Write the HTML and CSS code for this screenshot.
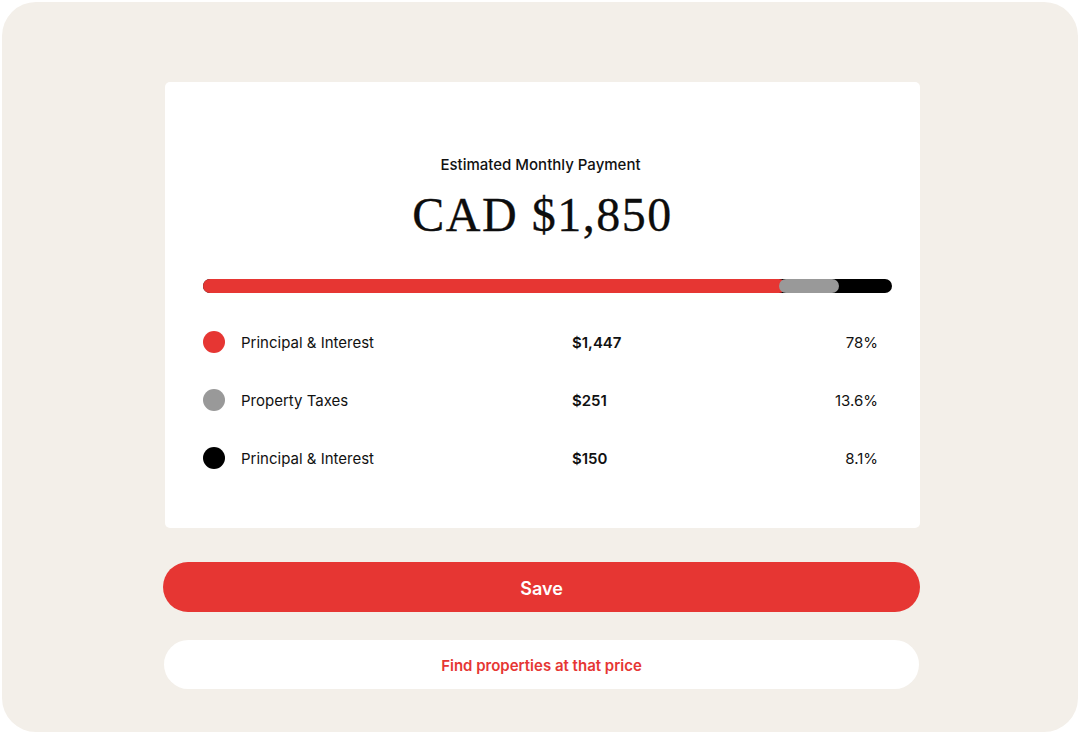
FILE: index.html
```html
<!DOCTYPE html>
<html lang="en">
<head>
    <meta charset="UTF-8">
    <meta name="viewport" content="width=device-width, initial-scale=1.0">
    <title>Estimated Monthly Payment</title>
    <link rel="stylesheet" href="styles.css">
</head>
<body>
    <div class="frame">
        <div class="column">
            <div class="card">
                <div class="card-title">Estimated Monthly Payment</div>
                <div class="amount">CAD $1,850</div>

                <div class="bar">
                    <div class="bar-seg seg-red"></div>
                    <div class="bar-seg seg-grey"></div>
                    <div class="bar-seg seg-black"></div>
                </div>

                <div class="rows">
                    <div class="row">
                        <span class="dot dot-red"></span>
                        <span class="row-label">Principal &amp; Interest</span>
                        <span class="row-value">$1,447</span>
                        <span class="row-pct">78%</span>
                    </div>
                    <div class="row">
                        <span class="dot dot-grey"></span>
                        <span class="row-label">Property Taxes</span>
                        <span class="row-value">$251</span>
                        <span class="row-pct">13.6%</span>
                    </div>
                    <div class="row">
                        <span class="dot dot-black"></span>
                        <span class="row-label">Principal &amp; Interest</span>
                        <span class="row-value">$150</span>
                        <span class="row-pct">8.1%</span>
                    </div>
                </div>
            </div>

            <button class="btn btn-save">Save</button>
            <button class="btn btn-find">Find properties at that price</button>
        </div>
    </div>
</body>
</html>
```

FILE: styles.css
```css
* {
    margin: 0;
    padding: 0;
    box-sizing: border-box;
}

body {
    font-family: Inter, 'Liberation Sans', sans-serif;
    background: #ffffff;
    color: #111111;
    height: 100vh;
    overflow: hidden;
}

.frame {
    margin: 2px;
    height: 730px;
    background: #f3efe9;
    border-radius: 34px;
    padding-top: 80px;
}

.column {
    width: 757px;
    margin-left: 161px;
    display: flex;
    flex-direction: column;
}

.card {
    margin-left: 2px;
    height: 446px;
    background: #ffffff;
    border-radius: 5px;
    padding: 73px 42px 0 38px;
}

.card-title {
    text-align: center;
    font-size: 15px;
    font-weight: 500;
    line-height: 20px;
}

.amount {
    margin-top: 12px;
    text-align: center;
    font-family: 'Liberation Serif', serif;
    font-size: 48px;
    line-height: 56px;
    letter-spacing: 1.5px;
    color: #0d0d0d;
    padding-left: 4px;
    -webkit-text-stroke: 0.3px #0d0d0d;
}

.bar {
    margin-top: 36px;
    margin-right: -14px;
    height: 14px;
    display: flex;
    background: #000000;
    border-radius: 7px;
}

.bar-seg {
    height: 14px;
    border-radius: 7px;
}

.seg-red {
    width: 583px;
    background: #e63633;
}

.seg-grey {
    width: 60px;
    margin-left: -7px;
    background: #999999;
}

.seg-black {
    flex: 1;
}

.rows {
    margin-top: 20px;
}

.row {
    height: 58px;
    display: flex;
    align-items: center;
    font-size: 15px;
}

.dot {
    width: 22px;
    height: 22px;
    border-radius: 50%;
    flex-shrink: 0;
}

.dot-red { background: #e63633; }
.dot-grey { background: #999999; }
.dot-black { background: #000000; }

.row-label {
    margin-left: 16px;
    width: 331px;
}

.row-value {
    font-weight: 600;
}

.row-pct {
    margin-left: auto;
}

.btn {
    border: none;
    border-radius: 25px;
    font-family: Inter, 'Liberation Sans', sans-serif;
    cursor: pointer;
}

.btn-save {
    margin-top: 34px;
    height: 50px;
    padding-top: 3px;
    background: #e63633;
    color: #ffffff;
    font-size: 18px;
    font-weight: 600;
}

.btn-find {
    margin-top: 28px;
    margin-left: 1px;
    margin-right: 1px;
    height: 49px;
    padding-top: 1px;
    background: #ffffff;
    color: #e63633;
    font-size: 15px;
    font-weight: 600;
}
```
